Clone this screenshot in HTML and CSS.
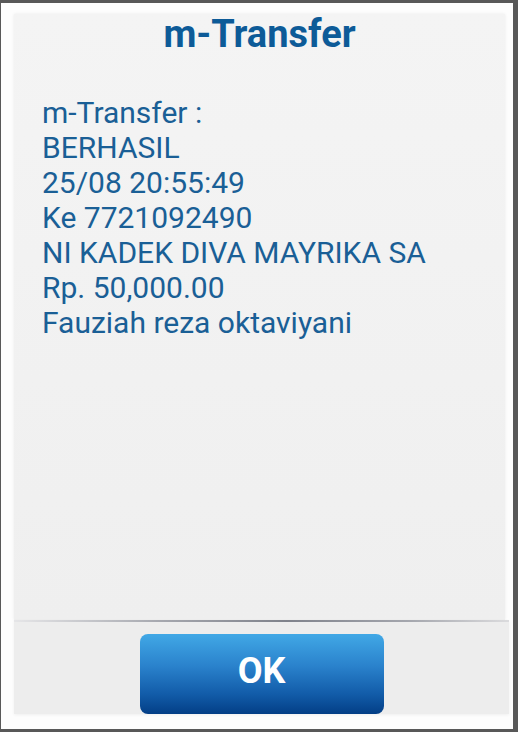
FILE: index.html
```html
<!DOCTYPE html>
<html>
<head>
<meta charset="utf-8">
<link rel="stylesheet" href="styles.css">
</head>
<body>
<div class="dialog">
  <div class="panel">
    <h1 class="title">m-Transfer</h1>
    <div class="message">
      <div>m-Transfer :</div>
      <div>BERHASIL</div>
      <div>25/08 20:55:49</div>
      <div>Ke 7721092490</div>
      <div>NI KADEK DIVA MAYRIKA SA</div>
      <div>Rp. 50,000.00</div>
      <div>Fauziah reza oktaviyani</div>
    </div>
  </div>
  <div class="footer">
    <button class="ok">OK</button>
  </div>
</div>
</body>
</html>
```

FILE: styles.css
```css
html, body {
  margin: 0;
  padding: 0;
}
body {
  width: 518px;
  height: 732px;
  background: #585858;
  font-family: Roboto, "Noto Sans", sans-serif;
  box-sizing: border-box;
  padding: 3px 5px 3px 1px;
}
.dialog {
  background: #fdfdfd;
  height: 726px;
  box-sizing: border-box;
  padding: 11px 4px 15px 13px;
  display: flex;
  flex-direction: column;
}
.panel {
  flex: 1;
  background: linear-gradient(180deg, #f4f4f4 0%, #f2f2f2 40%, #efefef 100%);
  box-shadow: 0 0 3px rgba(0,0,0,0.08);
  margin-right: 4px;
  display: flex;
  flex-direction: column;
}
.title {
  margin: 0;
  text-align: center;
  color: #0d5b98;
  font-size: 38px;
  font-weight: 700;
  line-height: 40px;
  padding-top: 0;
}
.message {
  padding: 41px 0 0 28px;
  color: #1a5f96;
  font-size: 30px;
  line-height: 35px;
}
.footer {
  height: 92px;
  border-top: 2px solid transparent;
  border-image: linear-gradient(90deg, #e6e6e8 0%, #a5a7ae 30%, #7f828b 55%, #a5a7ae 80%, #dcdcde 100%) 1;
  background: #ededed;
  display: flex;
  justify-content: center;
  align-items: flex-end;
  box-shadow: 0 1px 3px rgba(0,0,0,0.06);
}
.ok {
  width: 244px;
  height: 80px;
  border: none;
  border-radius: 8px;
  background: linear-gradient(180deg, #41a8e6 0%, #2a82cc 40%, #125ca9 75%, #033e86 100%);
  color: #ffffff;
  font-family: Roboto, "Noto Sans", sans-serif;
  font-weight: 700;
  font-size: 36px;
  padding: 0 0 6px 0;
}
```
